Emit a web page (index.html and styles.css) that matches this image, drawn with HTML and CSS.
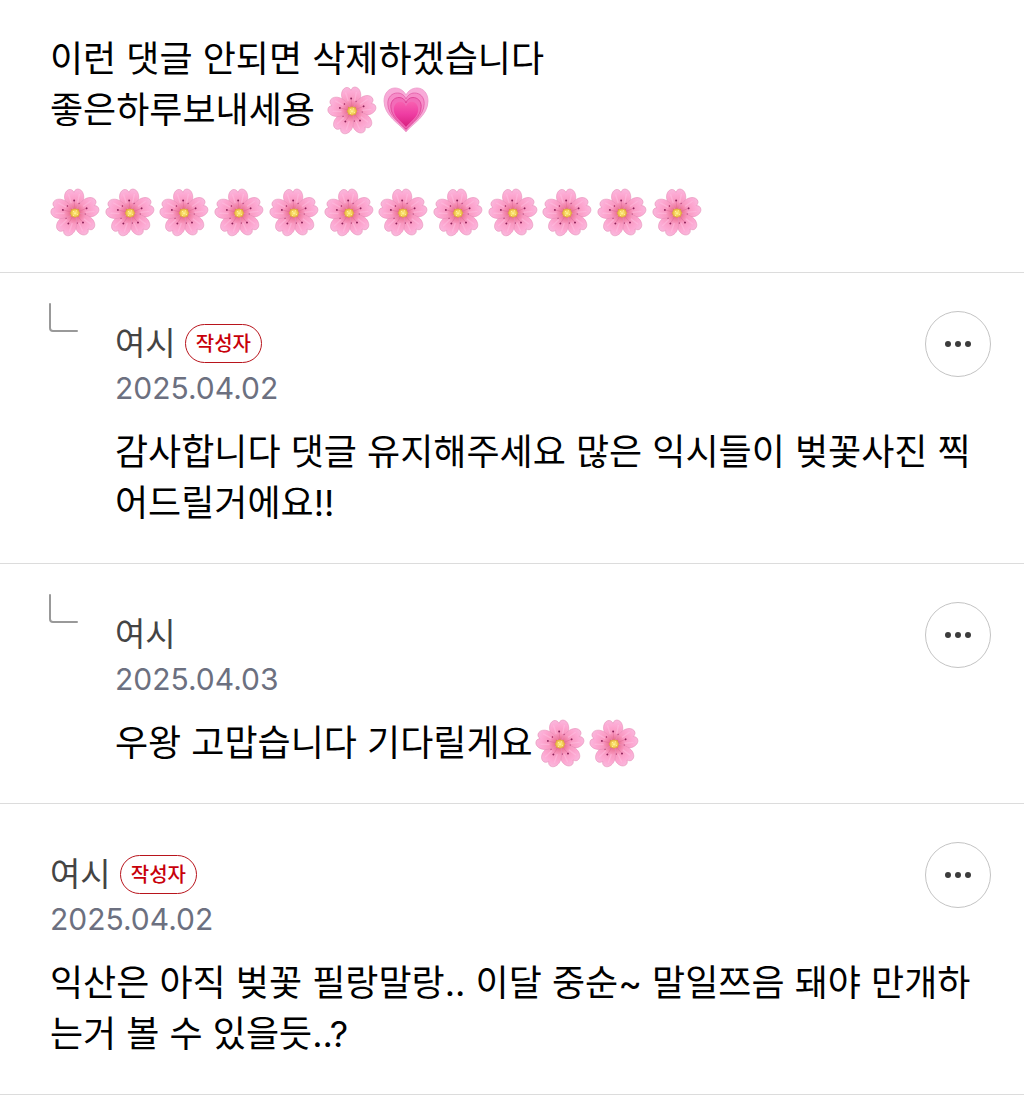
FILE: index.html
```html
<!DOCTYPE html>
<html lang="ko">

<head>
    <meta charset="UTF-8">
    <meta name="viewport" content="width=device-width, initial-scale=1.0">
    <title>댓글</title>
    <link rel="stylesheet" href="styles.css">
</head>

<body>
    <!-- shared emoji shapes -->
    <svg class="defs" aria-hidden="true">
        <defs>
            <radialGradient id="petal-fill" gradientUnits="userSpaceOnUse" cx="25" cy="26" r="25">
                <stop offset="0" stop-color="#d8446c" />
                <stop offset="0.25" stop-color="#ee7a9e" />
                <stop offset="0.45" stop-color="#f998c0" />
                <stop offset="0.8" stop-color="#fdaad4" />
                <stop offset="1" stop-color="#f8b8dc" />
            </radialGradient>
            <radialGradient id="center-fill">
                <stop offset="0" stop-color="#fff08c" />
                <stop offset="0.6" stop-color="#f2cc50" />
                <stop offset="1" stop-color="#d89440" />
            </radialGradient>
            <linearGradient id="heart-fill" x1="0" y1="0" x2="0" y2="1">
                <stop offset="0" stop-color="#f860b0" />
                <stop offset="0.5" stop-color="#ee3ca2" />
                <stop offset="1" stop-color="#d8207e" />
            </linearGradient>
            <g id="petal">
                <path d="M25 26C21 22.500 15.500 17 15 10C14.800 6 16.500 2.500 19.500 1.500C22 .8 24 2 25 4.500C26 2 28 .8 30.500 1.500C33.500 2.500 35.200 6 35 10C34.500 17 29 22.500 25 26Z" fill="url(#petal-fill)" stroke="#e78fb8" stroke-width=".6" />
                <path d="M21.500 15L19.500 7M28.500 15L30.500 7" stroke="#fec8e6" stroke-width="1.500" stroke-linecap="round" fill="none" opacity=".4" />
                <path d="M25 22L24.800 14" stroke="#dc6a96" stroke-width=".5" fill="none" />
                <circle cx="24.800" cy="13" r="1" fill="#8c2058" />
                <circle cx="30" cy="16.500" r=".8" fill="#a32a62" />
            </g>
            <symbol id="blossom" viewBox="-1 -1 52 52">
                <g transform="rotate(-3 25 26)">
                    <use href="#petal" />
                    <use href="#petal" transform="rotate(72 25 26)" />
                    <use href="#petal" transform="rotate(144 25 26)" />
                    <use href="#petal" transform="rotate(216 25 26)" />
                    <use href="#petal" transform="rotate(288 25 26)" />
                </g>
                <path d="M25 21L26.700 22L29 22L29.300 24L30.500 26L29.300 28L29 30L26.700 30L25 31.300L23.300 30L21 30L20.700 28L19.500 26L20.700 24L21 22L23.300 22Z" fill="url(#center-fill)" />
                <path d="M23 24.500h1M26 23.800h1M24.500 26.500h1M27 27.500h1M23 28.500h1" stroke="#fff5a8" stroke-width="1" />
            </symbol>
            <symbol id="heart" viewBox="0 0 50 50">
                <path d="M25 47C19 39 3 31 3 16C3 8 8 3 14 3C19 3 23 6 25 10C27 6 31 3 36 3C42 3 47 8 47 16C47 31 31 39 25 47Z" fill="#f8aad8" stroke="#ec9cca" stroke-width=".8" />
                <path d="M25 45.500C19.500 38 6.800 31 6.800 18.500C6.800 12 11 8 16.500 8C20.500 8 23.600 10.500 25 14C26.400 10.500 29.500 8 33.500 8C39 8 43.200 12 43.200 18.500C43.200 31 30.500 38 25 45.500Z" fill="#f68cc8" stroke="#e25ca6" stroke-width=".8" />
                <path d="M25 44C20 37.500 9.800 32 9.800 21.500C9.800 16 13.500 12.500 18 12.500C21.500 12.500 24 14.500 25 18C26 14.500 28.500 12.500 32 12.500C36.500 12.500 40.200 16 40.200 21.500C40.200 32 30 37.500 25 44Z" fill="#f26cb8" stroke="#da3a90" stroke-width=".8" />
                <path d="M25 42C20.500 36.500 12.800 32 12.800 24.500C12.800 20 15.800 16.800 19 16.800C22 16.800 24.300 18.500 25 21.500C25.700 18.500 28 16.800 31 16.800C34.200 16.800 37.200 20 37.200 24.500C37.200 32 29.500 36.500 25 42Z" fill="url(#heart-fill)" />
            </symbol>
        </defs>
    </svg>

    <main class="comments">
        <article class="comment">
            <p class="text">이런 댓글 안되면 삭제하겠습니다<br>좋은하루보내세용 <svg class="emoji" role="img" aria-label="벚꽃"><use href="#blossom" /></svg><svg class="emoji" role="img" aria-label="하트"><use href="#heart" /></svg><br><br></p>
            <div class="emoji-row">
                <svg class="emoji"><use href="#blossom" /></svg>
                <svg class="emoji"><use href="#blossom" /></svg>
                <svg class="emoji"><use href="#blossom" /></svg>
                <svg class="emoji"><use href="#blossom" /></svg>
                <svg class="emoji"><use href="#blossom" /></svg>
                <svg class="emoji"><use href="#blossom" /></svg>
                <svg class="emoji"><use href="#blossom" /></svg>
                <svg class="emoji"><use href="#blossom" /></svg>
                <svg class="emoji"><use href="#blossom" /></svg>
                <svg class="emoji"><use href="#blossom" /></svg>
                <svg class="emoji"><use href="#blossom" /></svg>
                <svg class="emoji"><use href="#blossom" /></svg>
            </div>
        </article>

        <article class="comment reply">
            <svg class="branch" viewBox="0 0 30 30" aria-hidden="true"><path d="M2 1V25Q2 28 5 28H29" /></svg>
            <div class="body">
                <header class="head">
                    <div class="info">
                        <div class="writer"><span class="name">여시</span><span class="badge">작성자</span></div>
                        <time class="date" datetime="2025-04-02">2025.04.02</time>
                    </div>
                    <button class="more" type="button" aria-label="더보기"><svg viewBox="0 0 26 6"><circle cx="3" cy="3" r="3" /><circle cx="13" cy="3" r="3" /><circle cx="23" cy="3" r="3" /></svg></button>
                </header>
                <p class="text">감사합니다 댓글 유지해주세요 많은 익시들이 벚꽃사진 찍어드릴거에요!!</p>
            </div>
        </article>

        <article class="comment reply">
            <svg class="branch" viewBox="0 0 30 30" aria-hidden="true"><path d="M2 1V25Q2 28 5 28H29" /></svg>
            <div class="body">
                <header class="head">
                    <div class="info">
                        <div class="writer"><span class="name">여시</span></div>
                        <time class="date" datetime="2025-04-03">2025.04.03</time>
                    </div>
                    <button class="more" type="button" aria-label="더보기"><svg viewBox="0 0 26 6"><circle cx="3" cy="3" r="3" /><circle cx="13" cy="3" r="3" /><circle cx="23" cy="3" r="3" /></svg></button>
                </header>
                <p class="text">우왕 고맙습니다 기다릴게요<svg class="emoji" role="img" aria-label="벚꽃"><use href="#blossom" /></svg><svg class="emoji" role="img" aria-label="벚꽃"><use href="#blossom" /></svg></p>
            </div>
        </article>

        <article class="comment">
            <div class="body">
                <header class="head">
                    <div class="info">
                        <div class="writer"><span class="name">여시</span><span class="badge">작성자</span></div>
                        <time class="date" datetime="2025-04-02">2025.04.02</time>
                    </div>
                    <button class="more" type="button" aria-label="더보기"><svg viewBox="0 0 26 6"><circle cx="3" cy="3" r="3" /><circle cx="13" cy="3" r="3" /><circle cx="23" cy="3" r="3" /></svg></button>
                </header>
                <p class="text">익산은 아직 벚꽃 필랑말랑.. 이달 중순~ 말일쯔음 돼야 만개하는거 볼 수 있을듯..?</p>
            </div>
        </article>
    </main>
</body>

</html>
```
FILE: styles.css
```css
body {
    margin: 0;
    background-color: #fff;
    color: #000;
    font-family: Inter, "Noto Sans CJK KR", sans-serif;
}

.defs {
    position: absolute;
    width: 0;
    height: 0;
}

.comment {
    padding: 34px 50px;
    border-bottom: 1px solid #dcdcdc;
}

.reply {
    display: flex;
    padding-left: 48px;
}

.branch {
    flex: none;
    width: 30px;
    height: 30px;
    margin-right: 37px;
    margin-top: -4px;
    fill: none;
    stroke: #999;
    stroke-width: 2;
    stroke-linecap: round;
}

.body {
    flex: 1;
    min-width: 0;
}

.head {
    display: flex;
    justify-content: space-between;
    align-items: flex-start;
    margin-right: -17px;
    margin-bottom: 16px;
}

.info {
    padding-top: 12px;
}

.writer {
    display: flex;
    align-items: center;
    height: 47px;
}

.name {
    color: #444;
    font-size: 33px;
    line-height: 46px;
}

.badge {
    box-sizing: border-box;
    height: 39px;
    margin-top: 2px;
    margin-left: 9px;
    padding: 0 10px;
    border: 1px solid #b8141c;
    border-radius: 20px;
    color: #c8000a;
    font-size: 20px;
    font-weight: 500;
    line-height: 38px;
}

.date {
    display: block;
    color: #6c7080;
    font-size: 30px;
    line-height: 45px;
}

.more {
    display: flex;
    align-items: center;
    justify-content: center;
    box-sizing: border-box;
    width: 66px;
    height: 66px;
    margin-top: 4px;
    padding: 0;
    border: 1px solid #c4c4c4;
    border-radius: 50%;
    background-color: #fff;
}

.more svg {
    width: 26px;
    height: 6px;
    fill: #3c3c3c;
}

.text {
    margin: 0;
    font-size: 36px;
    line-height: 51px;
}

.emoji {
    width: 50px;
    height: 50px;
    margin: 0 2px;
    vertical-align: top;
}

.emoji-row {
    display: flex;
    justify-content: space-between;
    max-width: 652px;
    height: 51px;
}

.emoji-row .emoji {
    margin: 0;
}
```
